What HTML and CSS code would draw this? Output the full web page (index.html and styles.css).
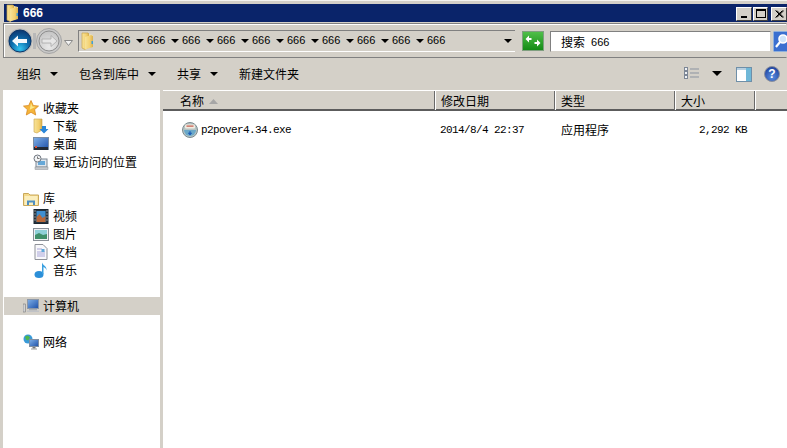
FILE: index.html
```html
<!DOCTYPE html>
<html lang="zh-CN">
<head>
<meta charset="utf-8">
<title>666</title>
<link rel="stylesheet" href="styles.css">
</head>
<body>
<svg class="defs" width="0" height="0" aria-hidden="true">
  <defs>
    <linearGradient id="gFolder" x1="0" y1="0" x2="1" y2="0"><stop offset="0" stop-color="#f7e39a"/><stop offset="0.6" stop-color="#f3d070"/><stop offset="1" stop-color="#d9b04e"/></linearGradient>
    <radialGradient id="gBack" cx="0.5" cy="0.85" r="0.8"><stop offset="0" stop-color="#35c5f0"/><stop offset="0.5" stop-color="#0d6fae"/><stop offset="1" stop-color="#0c3d77"/></radialGradient>
    <radialGradient id="gFwd" cx="0.5" cy="0.8" r="0.8"><stop offset="0" stop-color="#e8e8e8"/><stop offset="1" stop-color="#c4c4c4"/></radialGradient>
    <linearGradient id="gGreen" x1="0" y1="0" x2="0" y2="1"><stop offset="0" stop-color="#52c04a"/><stop offset="1" stop-color="#128a14"/></linearGradient>
    <radialGradient id="gHelp" cx="0.5" cy="0.7" r="0.7"><stop offset="0" stop-color="#5b8fe0"/><stop offset="1" stop-color="#1c3f9c"/></radialGradient>
    <linearGradient id="gScreen" x1="0" y1="0" x2="1" y2="1"><stop offset="0" stop-color="#7fb0e8"/><stop offset="1" stop-color="#1d4fa8"/></linearGradient>
    <symbol id="folderTall" viewBox="0 0 14 18">
      <path d="M1 1h6l1 1v13l-4 2.500-3-1.500z" fill="url(#gFolder)" stroke="#c9a348" stroke-width="0.7"/>
      <path d="M8 2l4 1v11l-4 2z" fill="#efe4b8"/>
      <path d="M4 5l6-2 2 1v11l-8 2.500z" fill="url(#gFolder)"/>
      <rect x="10.500" y="9" width="1.500" height="3" fill="#3f9fd8"/>
    </symbol>
  </defs>
</svg>
<div class="window">
  <header class="titlebar">
    <svg class="title-icon" width="14" height="18"><use href="#folderTall"/></svg>
    <span class="title-text">666</span>
    <div class="caption-buttons">
      <span class="cap-btn"><i class="cap-min"></i></span>
      <span class="cap-btn cap-btn-max"><i class="cap-max"></i></span>
      <span class="cap-btn cap-btn-close">
        <svg width="9" height="8" viewBox="0 0 9 8"><path d="M0.500 0.500l7 7M1.800 0.500l7 7M7.500 0.500l-7 7M8.800 0.500l-7 7" stroke="#000" stroke-width="1" fill="none"/></svg>
      </span>
    </div>
  </header>

  <div class="addressbar">
    <svg class="nav-btn" width="26" height="26" viewBox="0 0 26 26">
      <circle cx="13" cy="13" r="12.500" fill="#b9b9b9"/>
      <circle cx="13" cy="13" r="11" fill="url(#gBack)" stroke="#0b3568"/>
      <path d="M5 13l6-5.500v3.500h9v4h-9v3.500z" fill="#f4f8fc"/>
    </svg>
    <div class="nav-link"></div>
    <svg class="nav-btn" width="26" height="26" viewBox="0 0 26 26">
      <circle cx="13" cy="13" r="12.500" fill="#c8c8c8" stroke="#a5a5a5"/>
      <circle cx="13" cy="13" r="10" fill="url(#gFwd)" stroke="#8e8e8e"/>
      <path d="M21 13l-6-5.500v3.500h-9v4h9v3.500z" fill="#e6e6e6" stroke="#a8a8a8" stroke-width="0.800"/>
    </svg>
    <svg class="nav-chevron" width="9" height="6" viewBox="0 0 9 6"><path d="M0.500 0.500h8l-4 5z" fill="#f2f2f2" stroke="#8a8a8a"/></svg>
    <div class="crumbs">
      <svg class="crumb-folder" width="14" height="18"><use href="#folderTall"/></svg>
      <span class="crumb"><i class="arrow"></i><span class="crumb-text">666</span></span>
      <span class="crumb"><i class="arrow"></i><span class="crumb-text">666</span></span>
      <span class="crumb"><i class="arrow"></i><span class="crumb-text">666</span></span>
      <span class="crumb"><i class="arrow"></i><span class="crumb-text">666</span></span>
      <span class="crumb"><i class="arrow"></i><span class="crumb-text">666</span></span>
      <span class="crumb"><i class="arrow"></i><span class="crumb-text">666</span></span>
      <span class="crumb"><i class="arrow"></i><span class="crumb-text">666</span></span>
      <span class="crumb"><i class="arrow"></i><span class="crumb-text">666</span></span>
      <span class="crumb"><i class="arrow"></i><span class="crumb-text">666</span></span>
      <span class="crumb"><i class="arrow"></i><span class="crumb-text">666</span></span>
      <i class="arrow arrow-drop"></i>
    </div>
    <svg class="refresh" width="22" height="20" viewBox="0 0 22 20">
      <rect x="0.500" y="0.500" width="21" height="19" fill="url(#gGreen)" stroke="#7f9f7f"/>
      <path d="M3.500 8l3.500-3.500v2.500h2l1 1-1 1H7v2.500zM18.500 12L15 15.500V13h-2l-1-1 1-1h2V8.500z" fill="#fff"/>
    </svg>
    <div class="search">
      <span class="search-text">搜索</span><span class="search-num">666</span>
    </div>
    <svg class="search-btn" width="16" height="21" viewBox="0 0 16 21">
      <rect x="0.500" y="0.500" width="20" height="20" rx="1" fill="#3a6fd0" stroke="#8fb0dc"/>
      <circle cx="10" cy="8" r="4" fill="#cfe4fa" stroke="#fff" stroke-width="1.600"/>
      <path d="M7 11l-4 5" stroke="#fff" stroke-width="2.200"/>
    </svg>
  </div>

  <div class="toolbar">
    <span class="tool">组织<i class="arrow"></i></span>
    <span class="tool">包含到库中<i class="arrow"></i></span>
    <span class="tool">共享<i class="arrow"></i></span>
    <span class="tool">新建文件夹</span>
    <div class="tool-right">
      <svg width="15" height="13" viewBox="0 0 15 13">
        <g fill="#eef1f5" stroke="#7d8796"><rect x="0.500" y="0.500" width="3" height="3"/><rect x="0.500" y="4.500" width="3" height="3"/><rect x="0.500" y="8.500" width="3" height="3"/></g>
        <path d="M6 2h9M6 6h9M6 10h9" stroke="#8b93a0"/>
      </svg>
      <i class="arrow view-arrow"></i>
      <svg class="pane-icon" width="16" height="16" viewBox="0 0 16 16">
        <rect x="0.500" y="1.500" width="15" height="14" fill="#fff" stroke="#6f8fa8"/>
        <rect x="1" y="2" width="14" height="2" fill="#b8cfe0"/>
        <rect x="10" y="2" width="5" height="13" fill="#6fb8d8"/>
      </svg>
      <svg class="help-icon" width="16" height="16" viewBox="0 0 16 16">
        <circle cx="8" cy="8" r="7.500" fill="url(#gHelp)" stroke="#8a8f9c"/>
        <text x="8" y="12" class="help-q">?</text>
      </svg>
    </div>
  </div>

  <div class="main">
    <nav class="navpane">
      <div class="nav-row nav-root">
        <svg width="16" height="16" viewBox="0 0 16 16"><path d="M8 0.500l2.300 5 5.200 0.600-3.900 3.500 1.100 5.400-4.700-2.700-4.700 2.700 1.100-5.400L0.500 6.100l5.200-0.600z" fill="#f5b53a" stroke="#d98a22" stroke-width="0.800"/><path d="M8 3l1.400 3.500 3.300 0.300-6 3z" fill="#fbe98a"/></svg>
        <span>收藏夹</span>
      </div>
      <div class="nav-row nav-child">
        <svg width="16" height="16" viewBox="0 0 16 16"><path d="M1 1h8v11l-5 3-3-1z" fill="url(#gFolder)" stroke="#c9a348" stroke-width="0.600"/><path d="M9 8h4v3h2.500l-4.500 4.500L6.500 11H9z" fill="#2a86d8"/></svg>
        <span>下载</span>
      </div>
      <div class="nav-row nav-child">
        <svg width="16" height="14" viewBox="0 0 16 14"><rect x="0.500" y="0.500" width="15" height="12" fill="url(#gScreen)" stroke="#7b8ea5"/><rect x="1" y="10" width="14" height="3" fill="#222a35"/><rect x="2" y="9" width="2" height="2" fill="#d8503a"/></svg>
        <span>桌面</span>
      </div>
      <div class="nav-row nav-child">
        <svg width="16" height="16" viewBox="0 0 16 16"><rect x="3" y="5" width="11" height="8" fill="#dfe6ee" stroke="#7f8893"/><rect x="5" y="7" width="7" height="4" fill="#66a8d8"/><rect x="2" y="13" width="13" height="2.500" fill="#c5c8cc" stroke="#8b8f95" stroke-width="0.500"/><circle cx="4.500" cy="4.500" r="3.500" fill="#f3f4f6" stroke="#6f7680"/><path d="M4.500 2.500v2h2" stroke="#444" fill="none" stroke-width="0.700"/></svg>
        <span>最近访问的位置</span>
      </div>
      <div class="nav-gap"></div>
      <div class="nav-row nav-root">
        <svg width="16" height="15" viewBox="0 0 16 15"><path d="M0.500 2.500h5l1.500 1.500h8.500v10.500H0.500z" fill="#f4d98a" stroke="#c9a85a"/><rect x="1.500" y="5" width="13" height="9" fill="#fbeebc"/><path d="M4 14V9.500h8V14h-2v-2.500H6V14z" fill="#4f8fc0"/></svg>
        <span>库</span>
      </div>
      <div class="nav-row nav-child">
        <svg width="15" height="15" viewBox="0 0 15 15"><rect x="0.500" y="0.500" width="14" height="14" fill="#26343f" stroke="#1a2630"/><rect x="3" y="2" width="9" height="11" fill="#3f8fd0"/><path d="M3 8l3-3 3 4 3-2v6H3z" fill="#b8683a"/><path d="M1 2h1M1 5h1M1 8h1M1 11h1M13 2h1M13 5h1M13 8h1M13 11h1" stroke="#e6e6e6"/></svg>
        <span>视频</span>
      </div>
      <div class="nav-row nav-child">
        <svg width="16" height="13" viewBox="0 0 16 13"><rect x="0.500" y="0.500" width="15" height="12" fill="#eef0f2" stroke="#8a9098"/><rect x="2" y="2" width="12" height="9" fill="#8fd0d8"/><path d="M2 7l4-2 4 2 4-1v5H2z" fill="#3f8f6a"/></svg>
        <span>图片</span>
      </div>
      <div class="nav-row nav-child">
        <svg width="13" height="16" viewBox="0 0 13 16"><path d="M0.500 0.500h8l4 4v11H0.500z" fill="#f8f8fb" stroke="#8f9299"/><path d="M2.500 5h5M2.500 8h8M2.500 10h8M2.500 12h8" stroke="#a9a6d8"/><rect x="7" y="5" width="3" height="3" fill="#5fa8d8"/></svg>
        <span>文档</span>
      </div>
      <div class="nav-row nav-child">
        <svg width="14" height="16" viewBox="0 0 14 16"><ellipse cx="5" cy="12.500" rx="4.500" ry="3.500" fill="#2c8fd8"/><path d="M8 12V0.500c1 3 5 3.500 4.500 8-0.500-2.500-2-3-3-3.500V12z" fill="#3aa0e0"/></svg>
        <span>音乐</span>
      </div>
      <div class="nav-gap"></div>
      <div class="nav-row nav-root nav-selected">
        <svg width="16" height="14" viewBox="0 0 16 14"><rect x="0" y="5" width="2.500" height="8" fill="#d0d2d4" stroke="#666" stroke-width="0.500"/><rect x="4.500" y="0.500" width="11" height="9" fill="url(#gScreen)" stroke="#8b97a8"/><rect x="6" y="10" width="8" height="1.500" fill="#a8acb2"/><rect x="4" y="11.500" width="12" height="1.500" fill="#c0c2c6"/></svg>
        <span>计算机</span>
      </div>
      <div class="nav-gap"></div>
      <div class="nav-row nav-root">
        <svg width="16" height="16" viewBox="0 0 16 16"><circle cx="5" cy="5" r="4.500" fill="#3a9ad8"/><path d="M2 2.500l3-1 2 2-2 3-2-1z" fill="#4fb84a"/><rect x="6.500" y="5.500" width="9" height="7" fill="url(#gScreen)" stroke="#7f8ea2"/><rect x="9.500" y="13" width="3" height="1.500" fill="#777"/><rect x="8" y="14.500" width="6" height="1" fill="#999"/></svg>
        <span>网络</span>
      </div>
    </nav>

    <section class="files">
      <div class="header">
        <span class="col col-name">名称<svg class="sort" width="9" height="5" viewBox="0 0 9 5"><path d="M4.500 0l4.500 5H0z" fill="#a6a6a6"/></svg></span>
        <span class="col col-date">修改日期</span>
        <span class="col col-type">类型</span>
        <span class="col col-size">大小</span>
        <span class="col col-rest"></span>
      </div>
      <div class="row">
        <span class="cell cell-name">
          <svg width="16" height="16" viewBox="0 0 16 16"><circle cx="8" cy="8" r="7.500" fill="#b7c4c4" stroke="#7c8b8f"/><path d="M2 8a6 6 0 0 0 12 0z" fill="#6aa8c8"/><rect x="3" y="2.500" width="10" height="4" rx="1" fill="#f2ece0"/><rect x="4.500" y="3.500" width="7" height="1.200" fill="#c4584a"/><path d="M8 9v3M6.500 11L8 13l1.500-2z" stroke="#1f5fb8" fill="#1f5fb8"/></svg>
          <span class="mono">p2pover4.34.exe</span>
        </span>
        <span class="cell cell-date mono">2014/8/4 22:37</span>
        <span class="cell cell-type">应用程序</span>
        <span class="cell cell-size mono">2,292 KB</span>
      </div>
    </section>
  </div>
</div>
</body>
</html>
```

FILE: styles.css
```css
* { box-sizing: border-box; }
html, body { margin: 0; height: 100%; overflow: hidden; }
body { background: #d4d0c8; font: 12px/18px "Noto Sans CJK SC", "Liberation Sans", sans-serif; color: #000; }
.defs { display: block; height: 0; }
i { display: block; font-style: normal; }

.window { width: 787px; height: 448px; display: flex; flex-direction: column; overflow: hidden; padding: 4px 0 0 3px; border-top: 1px solid #f4f3f0; }
.titlebar { flex: none; height: 18px; margin: -1px 0 1px 1px; background: #0a246a; display: flex; align-items: center; padding-left: 2px; }
.title-icon { flex: none; }
.title-text { margin-left: 3px; color: #fff; font: bold 12px/18px "Liberation Sans", sans-serif; }
.caption-buttons { margin-left: auto; display: flex; gap: 1px; padding-top: 1px; }
.cap-btn { width: 16px; height: 14px; background: #d4d0c8; border: 1px solid; border-color: #fff #404040 #404040 #fff; display: flex; align-items: center; justify-content: center; position: relative; }
.cap-btn-max { margin-right: 2px; width: 15px; }
.cap-btn-close { width: 16px; }
.cap-min { width: 6px; height: 2px; background: #000; margin-top: 7px; }
.cap-max { width: 10px; height: 9px; border: 1px solid #000; border-top-width: 2px; }

.addressbar { flex: none; height: 35px; display: flex; align-items: center; border: 1px solid; border-color: #808080 transparent #808080 #808080; box-shadow: inset 1px 1px 0 #fff; padding: 1px 0 0 3px; }
.nav-btn { flex: none; }
.nav-link { width: 3px; height: 16px; background: #b8b8b8; flex: none; }
.nav-chevron { flex: none; margin: 3px 0 0 2px; }
.crumbs { flex: none; width: 437px; height: 22px; margin-left: 5px; display: flex; align-items: center; padding-left: 2px; border: solid; border-width: 1px 0 1px 1px; border-color: #808080 transparent #fff #808080; }
.crumb-folder { flex: none; margin-right: 6px; }
.crumb { display: flex; align-items: center; width: 35px; flex: none; }
.crumb-text { margin: -2px 0 0 3px; font: 11px/18px "Liberation Sans", sans-serif; }
.arrow { width: 0; height: 0; flex: none; border: 4px solid transparent; border-top-color: #000; border-bottom-width: 0; }
.arrow-drop { margin-left: 53px; border-left-width: 4px; border-right-width: 4px; border-top-width: 4px; }
.refresh { flex: none; margin-left: 7px; }
.search { flex: none; width: 221px; height: 21px; margin-left: 6px; background: #fff; border: 1px solid; border-color: #808080 #d4d0c8 #d4d0c8 #808080; display: flex; align-items: center; padding: 1px 0 0 10px; }
.search-num { margin-left: 6px; font: 11px/18px "Liberation Sans", sans-serif; }
.search-btn { flex: none; margin-left: 2px; }

.toolbar { flex: none; height: 32px; display: flex; align-items: center; padding: 0 0 1px 14px; }
.tool { display: flex; align-items: center; margin-right: 21px; }
.tool .arrow { margin-left: 9px; }
.tool-right { margin-left: auto; display: flex; align-items: center; padding-right: 7px; }
.view-arrow { margin: 0 14px 0 13px; border-left-width: 5px; border-right-width: 5px; border-top-width: 5px; }
.pane-icon { margin-right: 12px; }
.help-q { font: bold 12px "Liberation Sans", sans-serif; fill: #fff; text-anchor: middle; }

.main { flex: 1; min-height: 0; display: flex; }
.navpane { flex: none; width: 157px; background: #fff; padding-top: 9px; }
.nav-row { height: 18px; display: flex; align-items: center; white-space: nowrap; }
.nav-row svg { flex: none; }
.nav-root { padding-left: 20px; }
.nav-child { padding-left: 30px; }
.nav-root svg, .nav-child svg { margin-right: 4px; }
.nav-child svg { width: 16px; }
.nav-root svg { width: 16px; }
.nav-selected { background: #d4d0c8; margin-left: 1px; padding-left: 19px; width: 159px; }
.nav-gap { height: 18px; }

.files { flex: 1; min-width: 0; margin-left: 3px; background: #fff; }
.header { height: 21px; display: grid; grid-template-columns: 272px 120px 120px 80px 1fr; background: #d4d0c8; border-top: 1px solid #fff; border-bottom: 2px solid #5c5c5c; }
.col { display: flex; align-items: center; padding: 1px 0 0 6px; border-right: 1px solid #6a6a6a; box-shadow: 1px 0 0 #fff; }
.col-name { padding-left: 17px; }
.col-rest { border-right: 0; box-shadow: none; }
.sort { margin-left: 5px; }
.row { height: 18px; margin-top: 10px; display: grid; grid-template-columns: 272px 120px 120px 80px; align-items: center; }
.cell { display: flex; align-items: center; white-space: nowrap; }
.cell-name { padding-left: 19px; }
.cell-name svg { flex: none; margin-right: 3px; }
.cell-date { padding-left: 5px; }
.cell-type { padding-left: 6px; }
.cell-size { justify-content: flex-end; padding-right: 8px; }
.mono { font: 11px/18px "Liberation Mono", monospace; letter-spacing: -0.6px; }
```
